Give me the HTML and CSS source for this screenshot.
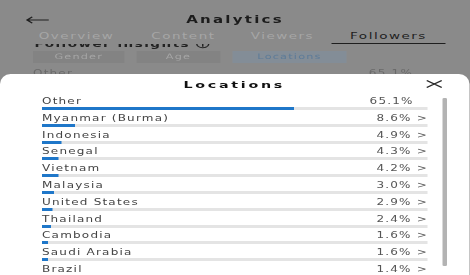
FILE: index.html
```html
<!DOCTYPE html>
<html lang="en">
<head>
    <meta charset="UTF-8">
    <meta name="viewport" content="width=device-width, initial-scale=1.0">
    <title>Analytics - Locations</title>
    <link rel="stylesheet" href="styles.css">
</head>
<body>
    <div class="screen">
        <!-- page behind the sheet -->
        <div class="topbar">
            <svg class="back" width="16" height="8" viewBox="0 0 16 8">
                <path d="M15.5 4H1M4.5 0.8L1 4l3.5 3.2" fill="none" stroke="#1e1e1e" stroke-width="1.1"/>
            </svg>
            <span class="page-title">Analytics</span>
        </div>
        <div class="tabs">
            <span class="tab">Overview</span>
            <span class="tab">Content</span>
            <span class="tab">Viewers</span>
            <span class="tab active">Followers</span>
        </div>
        <div class="insights"><span>Follower insights ⓘ</span></div>
        <div class="chips">
            <span class="chip">Gender</span>
            <span class="chip">Age</span>
            <span class="chip selected">Locations</span>
        </div>
        <div class="peek">
            <span>Other</span>
            <span>65.1%</span>
        </div>

        <!-- bottom sheet -->
        <div class="sheet">
            <div class="sheet-head">
                <span class="sheet-title">Locations</span>
                <svg class="close" width="11" height="8" viewBox="0 0 11 8">
                    <path d="M0.5 0.5L10.5 7.5M10.5 0.5L0.5 7.5" stroke="#2a2a2a" stroke-width="1.1"/>
                </svg>
            </div>
            <div class="sheet-body">
                <div class="rows">
                    <div class="row">
                        <div class="row-text"><span>Other</span><span class="pct plain">65.1%</span></div>
                        <div class="bar"><div class="fill" style="width:65.1%"></div></div>
                    </div>
                    <div class="row">
                        <div class="row-text"><span>Myanmar (Burma)</span><span class="pct">8.6% &gt;</span></div>
                        <div class="bar"><div class="fill" style="width:8.6%"></div></div>
                    </div>
                    <div class="row">
                        <div class="row-text"><span>Indonesia</span><span class="pct">4.9% &gt;</span></div>
                        <div class="bar"><div class="fill" style="width:4.9%"></div></div>
                    </div>
                    <div class="row">
                        <div class="row-text"><span>Senegal</span><span class="pct">4.3% &gt;</span></div>
                        <div class="bar"><div class="fill" style="width:4.3%"></div></div>
                    </div>
                    <div class="row">
                        <div class="row-text"><span>Vietnam</span><span class="pct">4.2% &gt;</span></div>
                        <div class="bar"><div class="fill" style="width:4.2%"></div></div>
                    </div>
                    <div class="row">
                        <div class="row-text"><span>Malaysia</span><span class="pct">3.0% &gt;</span></div>
                        <div class="bar"><div class="fill" style="width:3.0%"></div></div>
                    </div>
                    <div class="row">
                        <div class="row-text"><span>United States</span><span class="pct">2.9% &gt;</span></div>
                        <div class="bar"><div class="fill" style="width:2.9%"></div></div>
                    </div>
                    <div class="row">
                        <div class="row-text"><span>Thailand</span><span class="pct">2.4% &gt;</span></div>
                        <div class="bar"><div class="fill" style="width:2.4%"></div></div>
                    </div>
                    <div class="row">
                        <div class="row-text"><span>Cambodia</span><span class="pct">1.6% &gt;</span></div>
                        <div class="bar"><div class="fill" style="width:1.6%"></div></div>
                    </div>
                    <div class="row">
                        <div class="row-text"><span>Saudi Arabia</span><span class="pct">1.6% &gt;</span></div>
                        <div class="bar"><div class="fill" style="width:1.6%"></div></div>
                    </div>
                    <div class="row">
                        <div class="row-text"><span>Brazil</span><span class="pct">1.4% &gt;</span></div>
                        <div class="bar"><div class="fill" style="width:1.4%"></div></div>
                    </div>
                </div>
                <div class="scrollbar"></div>
            </div>
        </div>
    </div>
</body>
</html>
```

FILE: styles.css
```css
body {
    margin: 0;
    padding: 0;
    width: 470px;
    height: 275px;
    overflow: hidden;
    background-color: #8a8a8a; /* page under the dark overlay */
    font-family: 'DejaVu Sans', sans-serif;
}

/* the capture is stretched sideways, so the whole screen is drawn narrow and widened */
.screen {
    position: relative;
    width: 313.33px;
    height: 275px;
    transform: scaleX(1.5);
    transform-origin: 0 0;
}

.topbar {
    height: 30px;
    display: flex;
    align-items: center;
    padding-top: 9px;
    box-sizing: border-box;
}

.back {
    margin-left: 17px;
}

.page-title {
    flex: 1;
    text-align: center;
    margin-right: 33px;
    font-size: 10px;
    font-weight: bold;
    letter-spacing: 1.5px;
    color: #1c1c1c;
}

.tabs {
    position: relative;
    z-index: 1;
    display: flex;
    height: 14px;
    font-size: 9px;
    letter-spacing: 1px;
    color: #a6a6a6;
    line-height: 13px;
    background-color: #8a8a8a;
}

.tab {
    width: 64px;
    text-align: center;
}

.tab:nth-child(1) { margin-left: 19px; }
.tab:nth-child(2) { margin-left: 7.3px; }
.tab:nth-child(3) { margin-left: 2px; }

.tab.active {
    width: 76px;
    margin-left: 0.7px;
    color: #1e1e1e;
    border-bottom: 1.2px solid #1e1e1e;
    height: 12.5px;
}

.insights {
    height: 5px;
    overflow: hidden;
    padding-left: 23px;
    font-size: 9px;
    font-weight: bold;
    letter-spacing: 1px;
    color: #222;
}

.insights span {
    display: block;
    line-height: 11px;
    margin-top: -5px;
}

.chips {
    display: flex;
    gap: 8px;
    margin-top: 2px;
    padding-left: 22px;
}

.chip {
    width: 61px;
    height: 12px;
    line-height: 12px;
    text-align: center;
    font-size: 7.5px;
    letter-spacing: 0.8px;
    background-color: #838383;
    color: #a6a6a6;
}

.chip:nth-child(2) { width: 56px; }

.chip.selected {
    width: 76px;
    background-color: #838d97;
    color: #5d7b98;
}

.peek {
    display: flex;
    justify-content: space-between;
    margin: 6px 38px 0 22px;
    font-size: 8px;
    color: #6a6a6a;
    letter-spacing: 0.8px;
}

/* bottom sheet lies over the page */
.sheet {
    position: absolute;
    top: 74px;
    left: 0;
    right: 0;
    bottom: 0;
    background-color: #ffffff;
    border-radius: 7px 7px 0 0 / 10px 10px 0 0;
}

.sheet-head {
    display: flex;
    align-items: center;
    height: 21px;
    padding-bottom: 1px;
    box-sizing: border-box;
}

.sheet-title {
    flex: 1;
    text-align: center;
    margin-left: 33px;
    font-size: 9.5px;
    font-weight: bold;
    letter-spacing: 1.8px;
    color: #111;
}

.close {
    margin: 0 18px 0 5px;
}

.sheet-body {
    display: flex;
    padding-top: 1px;
}

.rows {
    width: 257.3px;
    margin-left: 28px;
}

.row {
    margin-bottom: 2.8px;
}

.row-text {
    display: flex;
    justify-content: space-between;
    height: 11px;
    line-height: 11px;
    font-size: 8px;
    letter-spacing: 0.8px;
    color: #444;
}

.pct {
    color: #555;
}

.pct.plain {
    padding-right: 9.5px;
}

.bar {
    height: 3px;
    background-color: #e4e4e4;
}

.fill {
    height: 100%;
    background-color: #1f77c9;
}

.scrollbar {
    width: 2.7px;
    height: 168px;
    margin: 2px 0 0 10px;
    background-color: #b3b3b3;
    border-radius: 1px;
}
```
